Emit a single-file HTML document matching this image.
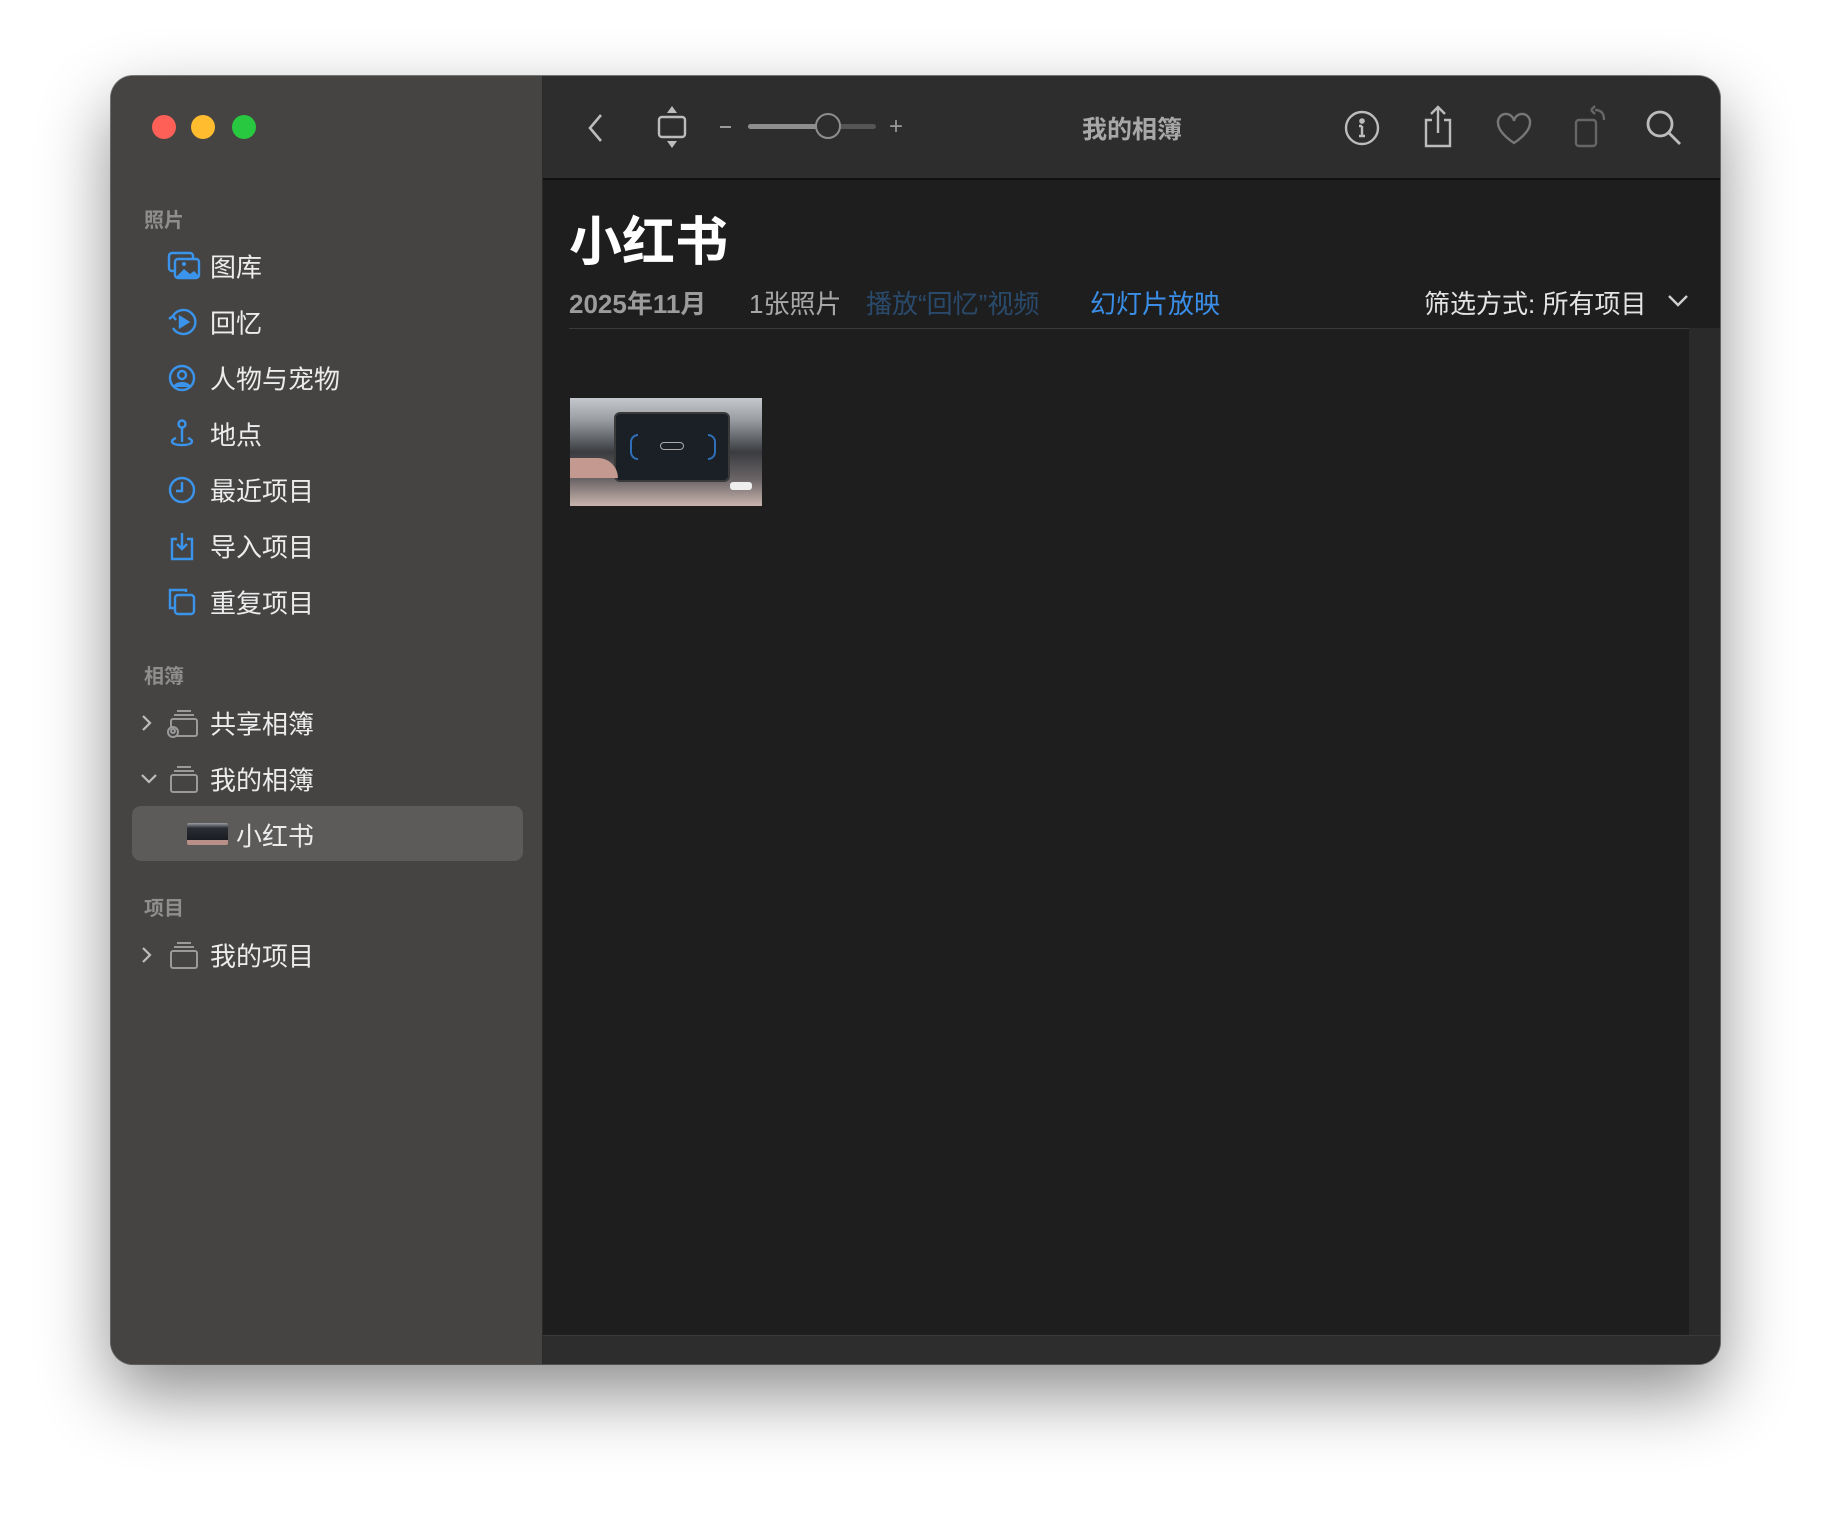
<!DOCTYPE html>
<html><head><meta charset="utf-8"><style>
*{margin:0;padding:0;box-sizing:border-box}
body{width:1832px;height:1514px;background:#fff;position:relative;overflow:hidden;font-family:"Liberation Sans","Noto Sans CJK SC",sans-serif}
.win{position:absolute;left:111px;top:76px;width:1609px;height:1288px;border-radius:22px;overflow:hidden;background:#1e1e1e;box-shadow:0 30px 70px rgba(0,0,0,.45),0 0 0 1px rgba(0,0,0,.5)}
.side{position:absolute;left:0;top:0;width:432px;height:100%;background:#454443;border-right:1px solid #2a2a2a}
.tl{position:absolute;top:39px;width:24px;height:24px;border-radius:50%}
.hdr{position:absolute;left:33px;font-size:20px;color:#8f8e8d;font-weight:bold}
.it{position:absolute;left:99px;font-size:26px;color:#ececec;transform:translateY(-50%)}
.ic{position:absolute;left:56px;transform:translateY(-50%)}
.chev{position:absolute;left:28px;transform:translateY(-50%)}
.tb{position:absolute;left:432px;top:0;right:0;height:104px;background:#2d2d2d;border-bottom:2px solid #111}
.t{position:absolute;white-space:nowrap}
</style></head><body>
<div class="win">
 <div class="side">
  <div class="tl" style="left:41px;background:#fe5f57"></div>
  <div class="tl" style="left:80px;background:#febc2e"></div>
  <div class="tl" style="left:121px;background:#28c840"></div>

  <div class="hdr" style="top:128px">照片</div>
  <svg class="ic" style="top:190px" width="34" height="30" viewBox="0 0 34 30" fill="none" stroke="#3b94ec" stroke-width="2.4"><rect x="2" y="2" width="24" height="18" rx="3"/><rect x="8" y="8" width="24" height="19" rx="3" fill="#454443"/><path d="M9 26l8-8 6 5 4-3 5 5v1H9z" fill="#3b94ec" stroke="none"/><circle cx="17" cy="13" r="2" fill="#3b94ec" stroke="none"/></svg>
  <div class="it" style="top:190px">图库</div>
  <svg class="ic" style="top:246px" width="32" height="32" viewBox="0 0 32 32" fill="none" stroke="#3b94ec" stroke-width="2.4"><path d="M6 10A12 12 0 1 1 6 22"/><path d="M2 13l4-3 3 4"/><path d="M13 11l8 5-8 5z" fill="#3b94ec"/></svg>
  <div class="it" style="top:246px">回忆</div>
  <svg class="ic" style="top:302px" width="30" height="30" viewBox="0 0 30 30" fill="none" stroke="#3b94ec" stroke-width="2.4"><circle cx="15" cy="15" r="12"/><circle cx="15" cy="12" r="4"/><path d="M7 24c3-5 13-5 16 0" fill="#3b94ec"/></svg>
  <div class="it" style="top:302px">人物与宠物</div>
  <svg class="ic" style="top:358px" width="30" height="32" viewBox="0 0 30 32" fill="none" stroke="#3b94ec" stroke-width="2.4"><circle cx="15" cy="6" r="3.5"/><path d="M15 10v14"/><path d="M9 20c-6 2-6 7 6 7s12-5 6-7"/></svg>
  <div class="it" style="top:358px">地点</div>
  <svg class="ic" style="top:414px" width="30" height="30" viewBox="0 0 30 30" fill="none" stroke="#3b94ec" stroke-width="2.4"><circle cx="15" cy="15" r="12"/><path d="M15 7v9H9"/></svg>
  <div class="it" style="top:414px">最近项目</div>
  <svg class="ic" style="top:470px" width="30" height="32" viewBox="0 0 30 32" fill="none" stroke="#3b94ec" stroke-width="2.4"><path d="M10 9H5v20h20V9h-5"/><path d="M15 3v16M10 14l5 5 5-5"/></svg>
  <div class="it" style="top:470px">导入项目</div>
  <svg class="ic" style="top:526px" width="30" height="30" viewBox="0 0 30 30" fill="none" stroke="#3b94ec" stroke-width="2.4"><path d="M19 5V3H3v18h4"/><rect x="8" y="8" width="19" height="19" rx="3"/></svg>
  <div class="it" style="top:526px">重复项目</div>

  <div class="hdr" style="top:584px">相簿</div>
  <svg class="chev" style="top:647px" width="14" height="20" viewBox="0 0 14 20" fill="none" stroke="#bdbdbd" stroke-width="2.2"><path d="M4 3l7 7-7 7"/></svg>
  <svg class="ic" style="top:647px" width="32" height="30" viewBox="0 0 32 30" fill="none" stroke="#9a9a9a" stroke-width="2"><path d="M10 3h14M7 7h20"/><rect x="4" y="11" width="26" height="17" rx="2"/><circle cx="6" cy="24" r="5" fill="#454443"/><circle cx="6" cy="23" r="2"/></svg>
  <div class="it" style="top:647px">共享相簿</div>
  <svg class="chev" style="top:703px" width="20" height="14" viewBox="0 0 20 14" fill="none" stroke="#bdbdbd" stroke-width="2.2"><path d="M3 3l7 7 7-7"/></svg>
  <svg class="ic" style="top:703px" width="32" height="30" viewBox="0 0 32 30" fill="none" stroke="#9a9a9a" stroke-width="2"><path d="M10 3h14M7 7h20"/><rect x="4" y="11" width="26" height="17" rx="2"/></svg>
  <div class="it" style="top:703px">我的相簿</div>
  <div style="position:absolute;left:21px;top:730px;width:391px;height:55px;border-radius:9px;background:#5c5b5a"></div>
  <div style="position:absolute;left:76px;top:747px;width:41px;height:22px;background:linear-gradient(#9a9ea2,#2a2d33 30%,#1a1c22);border-radius:2px;border-bottom:5px solid #b89088"></div>
  <div class="it" style="left:125px;top:759px">小红书</div>

  <div class="hdr" style="top:816px">项目</div>
  <svg class="chev" style="top:879px" width="14" height="20" viewBox="0 0 14 20" fill="none" stroke="#bdbdbd" stroke-width="2.2"><path d="M4 3l7 7-7 7"/></svg>
  <svg class="ic" style="top:879px" width="32" height="30" viewBox="0 0 32 30" fill="none" stroke="#9a9a9a" stroke-width="2"><path d="M10 3h14M7 7h20"/><rect x="4" y="11" width="26" height="17" rx="2"/></svg>
  <div class="it" style="top:879px">我的项目</div>
 </div>

 <div class="tb">
  <svg class="t" style="left:41px;top:36px" width="24" height="32" viewBox="0 0 24 32" fill="none" stroke="#bcbcbc" stroke-width="2.6"><path d="M17 3L6 16l11 13"/></svg>
  <svg class="t" style="left:111px;top:28px" width="36" height="46" viewBox="0 0 36 46" fill="none" stroke="#bcbcbc" stroke-width="2.4"><path d="M18 2l-5 7h10z" fill="#bcbcbc" stroke="none"/><rect x="5" y="13" width="26" height="20" rx="3"/><path d="M18 44l-5-7h10z" fill="#bcbcbc" stroke="none"/></svg>
  <div class="t" style="left:177px;top:50px;width:11px;height:2px;background:#9a9a9a"></div>
  <div class="t" style="left:205px;top:48px;width:128px;height:5px;border-radius:3px;background:#555"></div>
  <div class="t" style="left:205px;top:48px;width:75px;height:5px;border-radius:3px;background:#8e8e8e"></div>
  <div class="t" style="left:272px;top:37px;width:26px;height:26px;border-radius:50%;border:2.4px solid #8e8e8e;background:#2d2d2d"></div>
  <div class="t" style="left:346px;top:37px;font-size:24px;color:#9a9a9a">+</div>
  <div class="t" style="left:589px;top:34px;font-size:25px;font-weight:bold;color:#a8a8a8;transform:translateX(-50%)">我的相簿</div>
  <svg class="t" style="left:800px;top:33px" width="38" height="38" viewBox="0 0 38 38" fill="none" stroke="#bcbcbc" stroke-width="2.4"><circle cx="19" cy="19" r="16"/><path d="M19 17v10M16 27h6M16 17h3"/><circle cx="19" cy="12" r="1.6" fill="#bcbcbc"/></svg>
  <svg class="t" style="left:877px;top:28px" width="36" height="46" viewBox="0 0 36 46" fill="none" stroke="#bcbcbc" stroke-width="2.4"><path d="M12 16H6v26h24V16h-6"/><path d="M18 3v26M11 10l7-7 7 7"/></svg>
  <svg class="t" style="left:952px;top:36px" width="38" height="34" viewBox="0 0 38 34" fill="none" stroke="#777" stroke-width="2.4"><path d="M19 31S3 21 3 11a8 8 0 0 1 16-2 8 8 0 0 1 16 2c0 10-16 20-16 20z"/></svg>
  <svg class="t" style="left:1028px;top:28px" width="38" height="46" viewBox="0 0 38 46" fill="none" stroke="#666" stroke-width="2.4"><rect x="5" y="16" width="20" height="26" rx="3"/><path d="M24 6c6 0 9 3 9 10M20 6l4-4M20 6l4 4"/></svg>
  <svg class="t" style="left:1101px;top:32px" width="40" height="40" viewBox="0 0 40 40" fill="none" stroke="#bcbcbc" stroke-width="2.8"><circle cx="16" cy="16" r="12"/><path d="M25 25l11 11"/></svg>
 </div>

 <div class="t" style="left:458px;top:124px;font-size:53px;font-weight:bold;color:#fff">小红书</div>
 <div class="t" style="left:458px;top:208px;font-size:26px;font-weight:bold;color:#9c9c9c">2025年11月</div>
 <div class="t" style="left:638px;top:208px;font-size:26px;color:#a8a8a8">1张照片</div>
 <div class="t" style="left:755px;top:208px;font-size:26px;color:#2a4a6c">播放“回忆”视频</div>
 <div class="t" style="left:979px;top:208px;font-size:26px;color:#3a8ee8">幻灯片放映</div>
 <div class="t" style="left:1313px;top:208px;font-size:26px;color:#e4e4e4">筛选方式: 所有项目</div>
 <svg class="t" style="left:1555px;top:214px" width="24" height="20" viewBox="0 0 24 20" fill="none" stroke="#d0d0d0" stroke-width="2.4"><path d="M3 6l9 9 9-9"/></svg>
 <div class="t" style="left:458px;top:252px;width:1120px;height:1px;background:#3a3a3a"></div>
 <div class="t" style="left:1578px;top:252px;width:31px;height:1036px;background:#2a2a2a"></div>
 <div class="t" style="left:432px;top:1259px;width:1177px;height:29px;background:#2d2d2d;border-top:1px solid #3a3a3a"></div>

 <div class="t" style="left:459px;top:322px;width:192px;height:108px;overflow:hidden;background:linear-gradient(180deg,#c5c8cc 0%,#9a9ea2 20%,#3a3c40 50%,#6a6466 75%,#c8b4ae 100%)">
  <div style="position:absolute;left:44px;top:14px;width:116px;height:70px;background:#1b1f26;border-radius:6px;border:2px solid #3a3a3a"></div>
  <div style="position:absolute;left:60px;top:36px;width:8px;height:26px;border:2px solid #2f6fb8;border-right:none;border-radius:10px 0 0 10px"></div>
  <div style="position:absolute;left:138px;top:36px;width:8px;height:26px;border:2px solid #2f6fb8;border-left:none;border-radius:0 10px 10px 0"></div>
  <div style="position:absolute;left:90px;top:44px;width:24px;height:8px;border:1.5px solid #aaa;border-radius:4px"></div>
  <div style="position:absolute;left:0;top:60px;width:48px;height:20px;background:#c49a90;border-radius:0 30px 0 0"></div>
  <div style="position:absolute;left:160px;top:84px;width:22px;height:8px;background:#eee;border-radius:3px"></div>
 </div>
</div>
</body></html>
